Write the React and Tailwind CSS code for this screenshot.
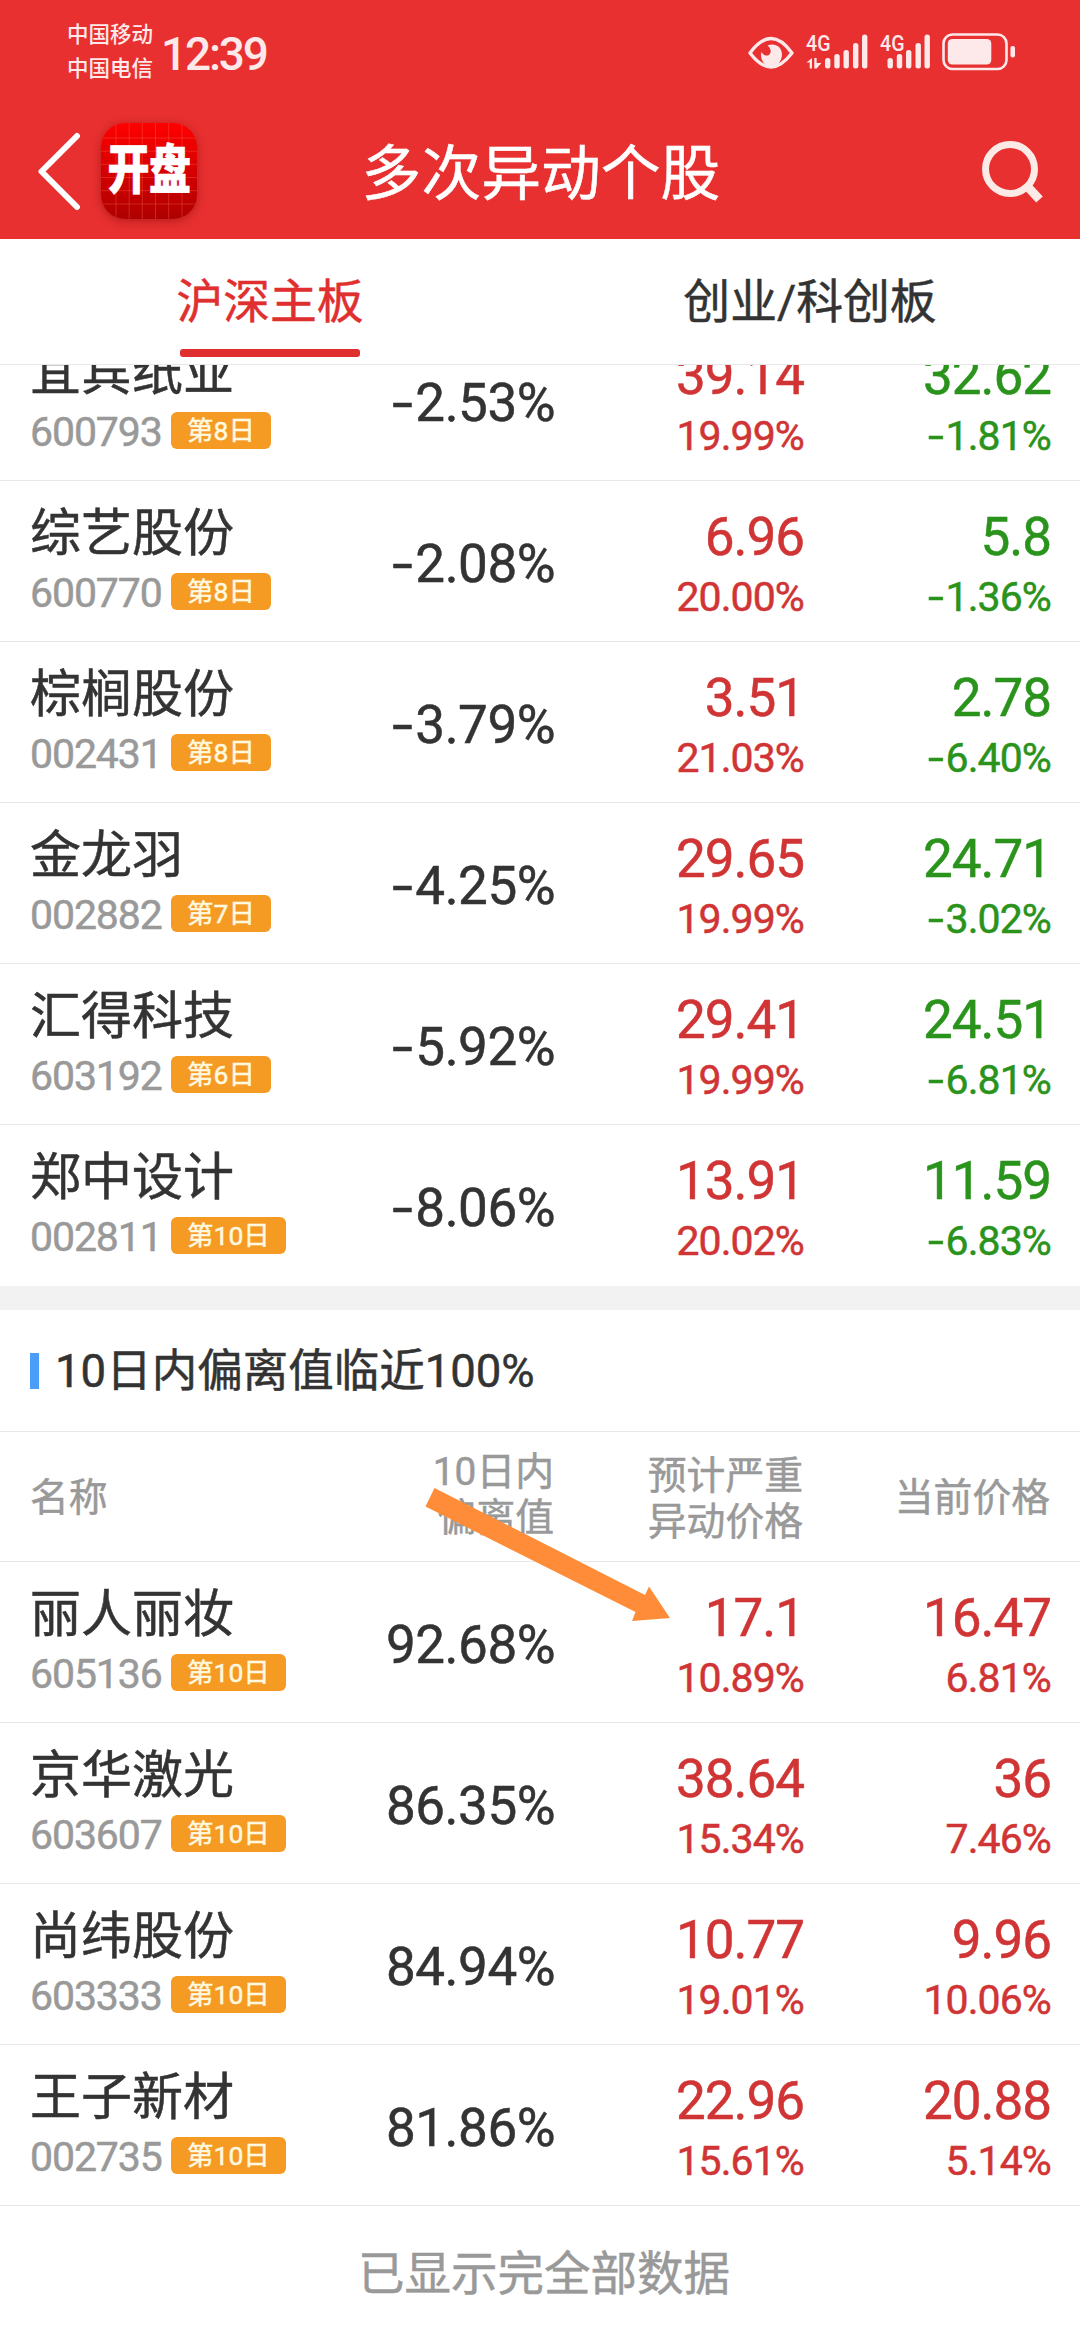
const nearLimit = [
  { name: "宜宾纸业", code: "600793", day: "第8日", dev: "-2.53%", target: "39.14", targetPct: "19.99%", price: "32.62", pct: "-1.81%" },
  { name: "综艺股份", code: "600770", day: "第8日", dev: "-2.08%", target: "6.96", targetPct: "20.00%", price: "5.8", pct: "-1.36%" },
  { name: "棕榈股份", code: "002431", day: "第8日", dev: "-3.79%", target: "3.51", targetPct: "21.03%", price: "2.78", pct: "-6.40%" },
  { name: "金龙羽", code: "002882", day: "第7日", dev: "-4.25%", target: "29.65", targetPct: "19.99%", price: "24.71", pct: "-3.02%" },
  { name: "汇得科技", code: "603192", day: "第6日", dev: "-5.92%", target: "29.41", targetPct: "19.99%", price: "24.51", pct: "-6.81%" },
  { name: "郑中设计", code: "002811", day: "第10日", dev: "-8.06%", target: "13.91", targetPct: "20.02%", price: "11.59", pct: "-6.83%" },
];

const tenDays = [
  { name: "丽人丽妆", code: "605136", day: "第10日", dev: "92.68%", target: "17.1", targetPct: "10.89%", price: "16.47", pct: "6.81%" },
  { name: "京华激光", code: "603607", day: "第10日", dev: "86.35%", target: "38.64", targetPct: "15.34%", price: "36", pct: "7.46%" },
  { name: "尚纬股份", code: "603333", day: "第10日", dev: "84.94%", target: "10.77", targetPct: "19.01%", price: "9.96", pct: "10.06%" },
  { name: "王子新材", code: "002735", day: "第10日", dev: "81.86%", target: "22.96", targetPct: "15.61%", price: "20.88", pct: "5.14%" },
];

/* number with a wider minus sign */
function Num({ value }) {
  if (!value.startsWith("-")) return value;

  return (
    <>
      <span className="inline-block scale-x-[1.4] mr-[0.12em]">-</span>
      {value.slice(1)}
    </>
  );
}

function EyeIcon() {
  return (
    <svg className="w-[46px] h-[38px]" viewBox="0 0 46 38" fill="none">
      <path d="M2 20C10 9 16 5.500 23 5.500S36 9 44 20C36 30.500 30 34 23 34S10 30.500 2 20Z" stroke="#fde8ea" strokeWidth="3.400" strokeLinejoin="round" />
      <path d="M19.500 12.500C26 9.500 34 13 34 21.500 34 28 29 34 23.500 34S13 28.500 13 22l.3-3c2 3 5 4.300 7.500 3 3-2 2.300-7-1.300-9.500Z" fill="#fde8ea" />
    </svg>
  );
}

const barShapes = [
  [0, 25],
  [9.3, 21],
  [18.500, 17],
  [28, 10],
  [37, 1.500],
];

function Signal({ data }) {
  const start = data ? 19 : 7.5;

  return (
    <svg className="w-[64px] h-[38px] overflow-visible" viewBox="0 0 64 38">
      <text x="0" y="17.500" fontSize="22" fontFamily="Roboto" fontWeight="500" textLength="24.500" lengthAdjust="spacingAndGlyphs" fill="#fde8ea">4G</text>
      {data && (
        <path d="M0.500 29.500 6 25V35.500H3.700V29.500ZM8.300 25h2.300V30H15.500L10.600 35.500H8.300Z" fill="#fde8ea" />
      )}
      {barShapes.map(([x, y]) => (
        <rect key={x} x={start + x} y={y} width="5.400" height={35.500 - y} rx="2.500" fill="#fde8ea" />
      ))}
    </svg>
  );
}

function BatteryIcon() {
  return (
    <svg className="w-[74px] h-[38px]" viewBox="0 0 74 38">
      <rect x="1.500" y="1.500" width="63" height="34.500" rx="9" fill="none" stroke="#fde8ea" strokeWidth="2.600" />
      <rect x="5.800" y="6" width="43.500" height="25.500" rx="4.500" fill="#fde8ea" />
      <rect x="68.500" y="13" width="4.500" height="11.500" rx="2" fill="#fde8ea" />
    </svg>
  );
}

function StatusBar() {
  return (
    <div className="h-[104px] pl-[67px] pr-[64px] flex items-start text-[#fde8ea] [-webkit-text-stroke:0]">
      <div className="pt-[18px] text-[21.500px] leading-[33.500px] font-medium">
        <p>中国移动</p>
        <p>中国电信</p>
      </div>
      <p className="ml-[8px] pt-[24px] text-[46px] leading-[60px] font-medium tracking-[-2.200px]">12:39</p>
      <div className="ml-auto pt-[33px] flex items-start">
        <EyeIcon />
        <div className="ml-[12px] w-[74px]">
          <Signal data />
        </div>
        <div className="w-[62px]">
          <Signal />
        </div>
        <BatteryIcon />
      </div>
    </div>
  );
}

function AppLogo() {
  return (
    <div className="relative w-[96px] h-[96px] rounded-[24px] overflow-hidden bg-linear-to-b from-[#ff0000] to-[#ae0000] flex items-center justify-center">
      <svg className="absolute inset-0 w-full h-full" viewBox="0 0 96 96" stroke="#ff6a5a" strokeOpacity="0.35" strokeWidth="1">
        {[15, 28.2, 41.300, 54.5, 67.7, 81].map((p) => (
          <path key={p} d={`M${p} 0V96M0 ${p}H96`} />
        ))}
      </svg>
      <span className="relative text-white text-[42px] leading-[50px] font-black scale-y-[1.28] tracking-[-0.500px]">开盘</span>
    </div>
  );
}

function TitleBar() {
  return (
    <div className="h-[135px] pl-[36px] pr-[32px] flex items-start justify-between">
      <div className="w-[240px] pt-[19px] flex items-center">
        <svg className="w-[46px] h-[80px]" viewBox="0 0 46 80" fill="none" stroke="#fff" strokeWidth="6" strokeLinecap="round" strokeLinejoin="round">
          <path d="M41 5 5.500 40.500 41 76" />
        </svg>
        <div className="ml-[19px] rounded-[24px] shadow-[0_2px_10px_rgba(120,0,0,0.45)]">
          <AppLogo />
        </div>
      </div>
      <h1 className="pt-[31px] text-[59.800px] leading-[80px] text-white">多次异动个股</h1>
      <div className="w-[242px] pt-[34px] flex justify-end">
        <svg className="w-[66px] h-[66px]" viewBox="0 0 66 66" fill="none" stroke="#fceae6">
          <circle cx="28" cy="31" r="24.500" strokeWidth="7" />
          <path d="M44.500 47.500 57.500 61.500" strokeWidth="9" />
        </svg>
      </div>
    </div>
  );
}

function Tabs() {
  return (
    <div className="h-[126px] grid grid-cols-2 border-b border-[#e8e8e8] text-[46.800px] leading-[64px]">
      <div className="flex flex-col items-center pt-[31px] text-[#e02f2f]">
        <span>沪深主板</span>
        <span className="mt-[15px] w-[180px] h-[8px] rounded-[3px] bg-[#e02f2f]" />
      </div>
      <div className="flex flex-col items-center pt-[31px] text-[#333]">
        <span>创业/科创板</span>
      </div>
    </div>
  );
}

function Price({ value, pct, color }) {
  return (
    <div className={`pt-[25px] text-right ${color}`}>
      <p className="h-[62px] leading-[62px] text-[53px] tracking-[-1px]">{value}</p>
      <p className="h-[59px] leading-[59px] text-[41px] tracking-[-0.900px]">
        <Num value={pct} />
      </p>
    </div>
  );
}

function StockRow({ stock, last }) {
  const down = stock.pct.startsWith("-");

  return (
    <div className={`h-[161px] pl-[30px] pr-[29px] grid grid-cols-[325px_200px_249px_247px] border-[#e8e8e8] ${last ? "" : "border-b"}`}>
      <div className="pt-[22px]">
        <p className="h-[62px] leading-[62px] text-[51px] text-[#333]">{stock.name}</p>
        <div className="h-[55px] flex items-center">
          <span className="w-[141px] pt-[2px] text-[41px] leading-[55px] text-[#999] tracking-[-1.100px]">{stock.code}</span>
          <span className="h-[37px] mt-[-2px] px-[16px] rounded-[6px] bg-[#f59a23] text-[#fff9e0] text-[26.500px] leading-[38px]">{stock.day}</span>
        </div>
      </div>
      <p className="text-right text-[53px] leading-[166px] text-[#333] tracking-[-0.500px]">
        <Num value={stock.dev} />
      </p>
      <Price value={stock.target} pct={stock.targetPct} color="text-[#d03434]" />
      <Price value={stock.price} pct={stock.pct} color={down ? "text-[#2a931c]" : "text-[#d03434]"} />
    </div>
  );
}

function TableHead() {
  return (
    <div className="h-[130px] pl-[30px] pr-[30px] grid grid-cols-[324px_200px_249px_247px] items-center border-b border-[#e8e8e8] text-[38.800px] leading-[46px] text-[#999]">
      <p className="pt-[2px]">名称</p>
      <p className="text-right pb-[4px]">
        10日内
        <br />
        偏离值
      </p>
      <p className="text-right pt-[4px]">
        预计严重
        <br />
        异动价格
      </p>
      <p className="text-right pt-[2px]">当前价格</p>
    </div>
  );
}

/* hand drawn pointer lying over the table */
function Arrow() {
  return (
    <svg className="absolute left-[425px] top-[177px] w-[246px] h-[136px]" viewBox="0 0 246 136">
      <path d="M9.500 1 220 108 224 99.500 245 131 207 134 210.500 125 0.500 19.500Z" fill="#ff8c39" />
    </svg>
  );
}

export default function App() {
  return (
    <div className="w-[1080px] h-[2340px] overflow-hidden bg-white flex flex-col font-['Roboto','Noto_Sans_CJK_SC',sans-serif] [-webkit-text-stroke:0.5px]">
      <header className="shrink-0 bg-[#e83030]">
        <StatusBar />
        <TitleBar />
      </header>
      <Tabs />

      {/* list is scrolled, first row is cut by the tabs */}
      <div className="h-[921px] shrink-0 overflow-hidden flex flex-col justify-end">
        {nearLimit.map((s, i) => (
          <StockRow key={s.code} stock={s} last={i === nearLimit.length - 1} />
        ))}
      </div>

      <div className="h-[24px] shrink-0 bg-[#f2f2f2]" />

      <section className="relative">
        <div className="h-[122px] pl-[30px] flex items-center border-b border-[#e8e8e8]">
          <span className="w-[9px] h-[36px] bg-[#4a9ef8]" />
          <h2 className="ml-[16px] pt-[2px] text-[45.500px] leading-[60px] text-[#333]">10日内偏离值临近100%</h2>
        </div>
        <TableHead />
        {tenDays.map((s) => (
          <StockRow key={s.code} stock={s} />
        ))}
        <Arrow />
      </section>

      <p className="pt-[36px] pl-[8px] text-center text-[46.500px] leading-[64px] text-[#999]">已显示完全部数据</p>
    </div>
  );
}
